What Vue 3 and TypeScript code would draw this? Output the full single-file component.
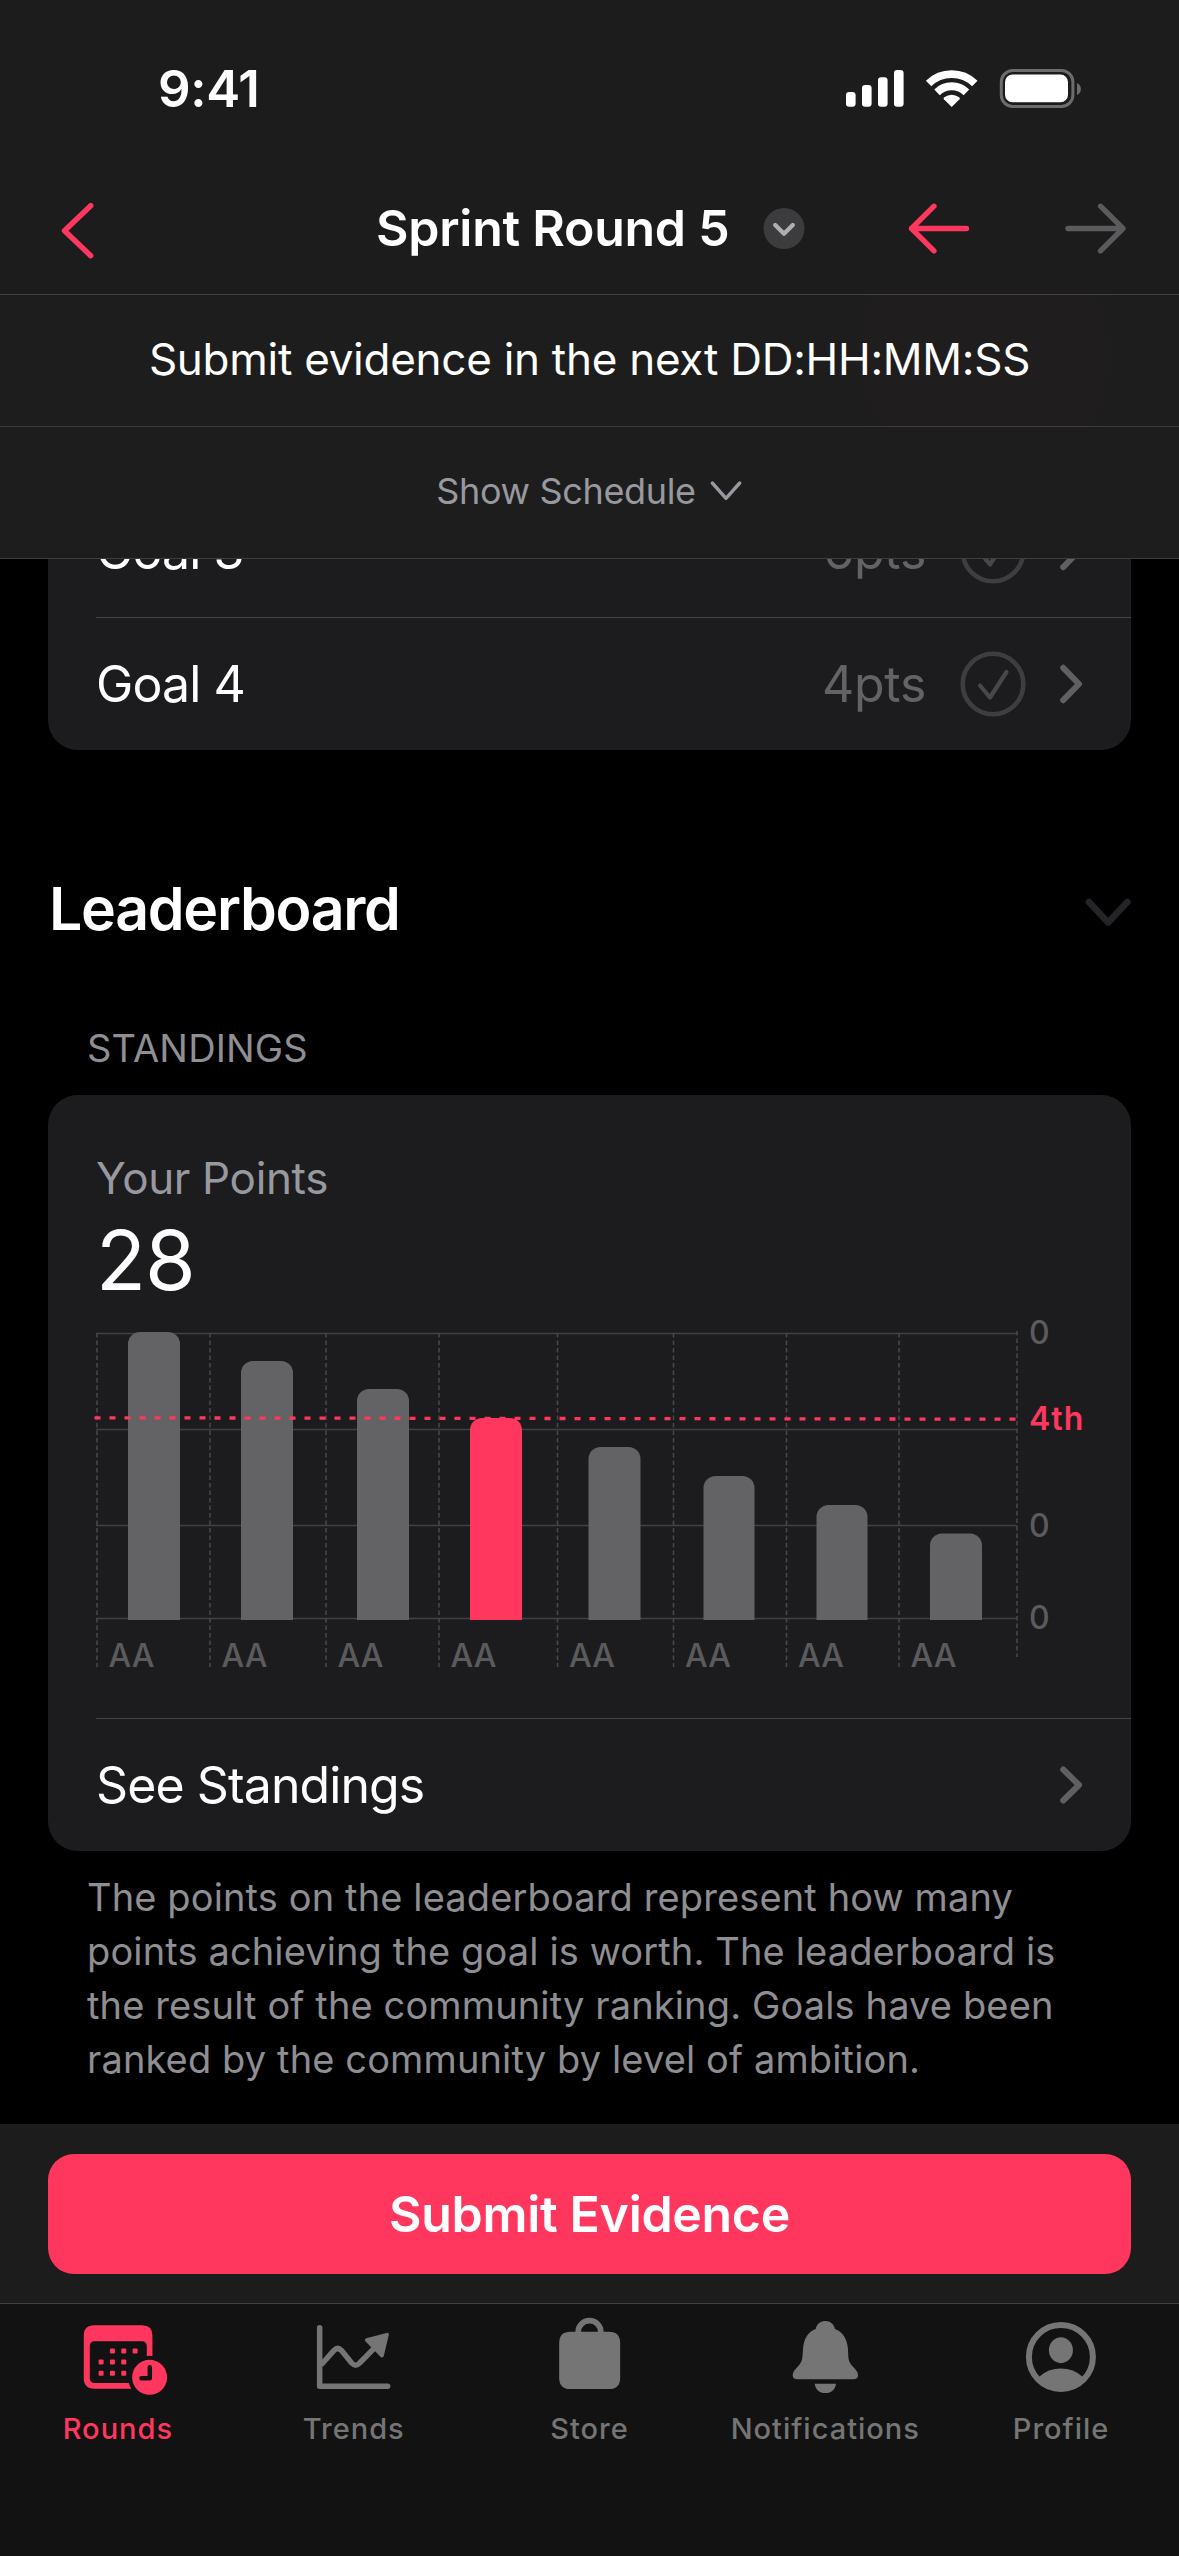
<script setup lang="ts">
interface Goal {
  name: string
  points: string
}

interface Column {
  x: number
  barX: number
  barWidth: number
  top: number
  own?: boolean
}

const goals: Goal[] = [
  { name: 'Goal 3', points: '6pts' },
  { name: 'Goal 4', points: '4pts' },
]

const columns: Column[] = [
  { x: 1, barX: 32, barWidth: 52, top: 6 },
  { x: 114, barX: 145, barWidth: 52, top: 35 },
  { x: 230, barX: 261, barWidth: 52, top: 63 },
  { x: 343, barX: 374, barWidth: 52, top: 92, own: true },
  { x: 461.5, barX: 492.5, barWidth: 52, top: 121 },
  { x: 577.5, barX: 607.5, barWidth: 51, top: 150 },
  { x: 690.5, barX: 720.5, barWidth: 51, top: 179 },
  { x: 803, barX: 834, barWidth: 52, top: 207.5 },
]

const gridLines: number[] = [7.5, 103.5, 199.5, 292.5]
const baseline = 294

const axisLabels = [
  { y: 18, text: '0' },
  { y: 210.5, text: '0' },
  { y: 303, text: '0' },
]

// Bar outline: rounded at the top, square at the baseline
function barPath(c: Column): string {
  const r = 12
  const right = c.barX + c.barWidth
  return `M${c.barX} ${baseline}V${c.top + r}a${r} ${r} 0 0 1 ${r} ${-r}H${right - r}a${r} ${r} 0 0 1 ${r} ${r}V${baseline}Z`
}
</script>

<template>
  <div class="screen">
    <header class="top">
      <div class="status">
        <span class="time">9:41</span>
        <svg class="status-icons" width="240" height="44" viewBox="844 66 240 44">
          <g fill="#fff">
            <rect x="846" y="91" width="9.6" height="14.7" rx="3.2" />
            <rect x="862" y="84" width="9.6" height="21.7" rx="3.2" />
            <rect x="878" y="76.3" width="9.6" height="29.4" rx="3.2" />
            <rect x="894" y="69" width="9.6" height="36.7" rx="3.2" />
            <path d="M951.7 106L943.9 98.3Q943 97.2 944.2 96.3Q951.7 91 959.2 96.3Q960.4 97.2 959.5 98.3Z" />
          </g>
          <g fill="none" stroke="#fff">
            <path d="M928.6 82.5A33.3 33.3 0 0 1 974.8 82.5" stroke-width="7.8" />
            <path d="M937 91.3A21.1 21.1 0 0 1 966.4 91.3" stroke-width="8" />
          </g>
          <rect x="1001.3" y="69.5" width="71.6" height="36" rx="11.5" fill="none" stroke="#6c6c6c" stroke-width="3" />
          <rect x="1005" y="73.5" width="63" height="27.7" rx="7.5" fill="#fff" />
          <path d="M1077 82V94Q1080.9 92 1080.9 88Q1080.9 84 1077 82Z" fill="#6c6c6c" />
        </svg>
      </div>
      <nav class="nav">
        <svg width="40" height="64" viewBox="58 197 40 64">
          <path d="M90.7 205.7L64.5 230.7L90.7 255.7" class="line accent" stroke-width="5.4" />
        </svg>
        <span class="title">Sprint Round 5</span>
        <svg class="toggle" width="42" height="42" viewBox="0 0 42 42">
          <circle cx="21" cy="20.500" r="20.500" fill="#3c3c3e" />
          <path d="M12.200 17L21 25.800L29.800 17" class="line" stroke="#aeaeb5" stroke-width="4.300" />
        </svg>
        <svg class="prev" width="64" height="52" viewBox="0 0 64 52">
          <path d="M5.500 25.500H60.500M28 3.200L5.500 25.500L28 47.800" class="line accent" stroke-width="5.300" />
        </svg>
        <svg class="next" width="64" height="52" viewBox="0 0 64 52">
          <path d="M60 25.500H5M37.500 3.200L60 25.500L37.500 47.800" class="line" stroke="#5b5b5e" stroke-width="5.300" />
        </svg>
      </nav>
      <div class="notice">Submit evidence in the next DD:HH:MM:SS</div>
      <div class="schedule">
        <span>Show Schedule</span>
        <svg width="34" height="24" viewBox="0 0 34 24">
          <path d="M3.300 4L17 19.300L30.700 4" class="line" stroke="#98989f" stroke-width="3.400" />
        </svg>
      </div>
    </header>

    <main class="content">
      <section class="card goals">
        <div v-for="goal in goals" :key="goal.name" class="row">
          <span class="row-name">{{ goal.name }}</span>
          <span class="points">{{ goal.points }}</span>
          <svg class="check" width="66" height="66" viewBox="0 0 66 66">
            <circle cx="33" cy="33" r="30.300" fill="none" stroke="#3e3e41" stroke-width="4.600" />
            <path d="M20 34.500L30 46.500L46.500 21" class="line" stroke="#48484a" stroke-width="4.200" />
          </svg>
          <svg width="24" height="44" viewBox="0 0 24 44">
            <path d="M4.200 5.800L20 22L4.200 38.200" class="line" stroke="#5f5f64" stroke-width="6" />
          </svg>
        </div>
      </section>

      <div class="heading">
        <h2>Leaderboard</h2>
        <svg width="48" height="34" viewBox="0 0 48 34">
          <path d="M6 6L25.200 26.500L44.300 6" class="line" stroke="#242428" stroke-width="6.600" />
        </svg>
      </div>

      <div class="section-label">STANDINGS</div>

      <section class="card standings">
        <div class="summary">
          <div class="summary-label">Your Points</div>
          <div class="summary-value">28</div>
        </div>
        <svg class="chart" width="1035" height="350" viewBox="0 0 1035 350">
          <g stroke="#414144" stroke-width="1.500">
            <line v-for="y in gridLines" :key="y" x1="0" :y1="y" x2="921" :y2="y" />
          </g>
          <g stroke="#48484b" stroke-width="1.500" stroke-dasharray="4.500 3">
            <line v-for="c in columns" :key="c.x" :x1="c.x" y1="7" :x2="c.x" y2="341" />
            <line x1="921" y1="5" x2="921" y2="331" />
          </g>
          <path v-for="c in columns" :key="c.x" :d="barPath(c)" :fill="c.own ? '#ff375f' : '#636365'" />
          <line x1="-1.500" y1="91.800" x2="920" y2="93.200" stroke="#ff375f" stroke-width="3.300" stroke-dasharray="6 9" />
          <text v-for="c in columns" :key="c.x" :x="c.x + 11.5" y="341" class="tick">AA</text>
          <text v-for="label in axisLabels" :key="label.y" x="933" :y="label.y" class="tick">{{ label.text }}</text>
          <text x="933" y="104" class="tick own">4th</text>
        </svg>
        <div class="row">
          <span class="row-name">See Standings</span>
          <svg width="24" height="44" viewBox="0 0 24 44">
            <path d="M4.200 6.500L20 22L4.200 37.500" class="line" stroke="#5f5f64" stroke-width="6" />
          </svg>
        </div>
      </section>

      <p class="footnote">
        The points on the leaderboard represent how many<br />
        points achieving the goal is worth. The leaderboard is<br />
        the result of the community ranking. Goals have been<br />
        ranked by the community by level of ambition.
      </p>
    </main>

    <div class="action">
      <button type="button" class="submit">Submit Evidence</button>
    </div>

    <footer class="tabs">
      <div class="tab active">
        <svg width="120" height="100" viewBox="173.700 42 360 300">
          <defs>
            <mask id="clock-gap">
              <rect x="170" y="40" width="370" height="310" fill="#fff" />
              <circle cx="448.500" cy="262" r="65" fill="#000" />
            </mask>
          </defs>
          <path mask="url(#clock-gap)" fill-rule="evenodd" d="M283 106H426Q457 106 457 137V265Q457 296 426 296H283Q251 296 251 265V137Q251 106 283 106ZM284 154Q269 154 269 169V264Q269 279 284 279H425Q440 279 440 264V169Q440 154 425 154Z" />
          <rect x="329.500" y="175.500" width="15" height="15" rx="3" />
          <rect x="363.500" y="175.500" width="15" height="15" rx="3" />
          <rect x="397.500" y="175.500" width="15" height="15" rx="3" />
          <rect x="295.500" y="208.500" width="15" height="15" rx="3" />
          <rect x="329.500" y="208.500" width="15" height="15" rx="3" />
          <rect x="363.500" y="208.500" width="15" height="15" rx="3" />
          <rect x="295.500" y="242.500" width="15" height="15" rx="3" />
          <rect x="329.500" y="242.500" width="15" height="15" rx="3" />
          <rect x="363.500" y="242.500" width="15" height="15" rx="3" />
          <circle cx="448.500" cy="262" r="52.500" />
          <path d="M449 232V264.500H424" fill="none" stroke="#121212" stroke-width="13.500" stroke-linecap="round" stroke-linejoin="round" />
        </svg>
        <span>Rounds</span>
      </div>
      <div class="tab">
        <svg width="120" height="100" viewBox="882 42 360 300">
          <g fill="none" stroke="#757575" stroke-width="16.500" stroke-linecap="round" stroke-linejoin="round">
            <path d="M959 113V289H1163" />
            <path d="M963 225L1002 181Q1013 170 1024 181L1055 219Q1067 232 1079 219L1128 169" stroke-linecap="butt" />
            <path d="M1100 150L1161 134L1146 197Z" fill="#757575" stroke-width="11" />
          </g>
        </svg>
        <span>Trends</span>
      </div>
      <div class="tab">
        <svg width="120" height="100" viewBox="388.500 42 360 300">
          <path d="M513 125H628Q662 125 662 159V263Q662 297 628 297H513Q479 297 479 263V159Q479 125 513 125Z" />
          <path d="M536 130V126A34 34 0 0 1 604 126V130" fill="none" stroke="#757575" stroke-width="17" />
        </svg>
        <span>Store</span>
      </div>
      <div class="tab">
        <svg width="120" height="100" viewBox="-44 42 360 300">
          <path d="M137 93C152 93 163 102 166 117C190 126 203 148 205 178C206 208 206 216 220 230C229 239 235 246 235 256Q235 268 221 268H53Q39 268 39 256C39 246 45 239 54 230C68 216 68 208 70 178C72 148 84 126 108 117C111 102 122 93 137 93Z" />
          <path d="M105 281H169C167 298 155 309 137 309C119 309 107 298 105 281Z" />
        </svg>
        <span>Notifications</span>
      </div>
      <div class="tab">
        <svg width="120" height="100" viewBox="663.300 42 360 300">
          <circle cx="843" cy="201" r="96" fill="none" stroke="#757575" stroke-width="18" />
          <ellipse cx="843" cy="180.500" rx="36" ry="39" />
          <path d="M778 260Q805 235.500 843 235.500Q881 235.500 908 260Q884 300 843 300Q802 300 778 260Z" />
        </svg>
        <span>Profile</span>
      </div>
    </footer>
  </div>
</template>

<style>
body {
  background: #000;
}
</style>

<style scoped>
.screen {
  width: 1179px;
  height: 2556px;
  overflow: hidden;
  display: flex;
  flex-direction: column;
  background: #000;
  color: #fff;
  font-family: Inter, "Liberation Sans", sans-serif;
}

svg {
  display: block;
  flex: none;
}

.line {
  fill: none;
  stroke-linecap: round;
  stroke-linejoin: round;
}

.accent {
  stroke: #ff375f;
}

.top {
  flex: none;
  background: #1c1c1c;
}

.status {
  height: 165px;
  box-sizing: border-box;
  padding: 12px 95px 0 158px;
  display: flex;
  align-items: center;
  justify-content: space-between;
}

.time {
  font-size: 51px;
  font-weight: 600;
  letter-spacing: -0.3px;
}

.nav {
  height: 127px;
  padding: 0 0 2px 58px;
  border-bottom: 1px solid #414141;
  display: flex;
  align-items: center;
}

.title {
  width: 356px;
  margin-left: 278px;
  padding-bottom: 2px;
  font-size: 50px;
  font-weight: 600;
  letter-spacing: -0.25px;
  white-space: nowrap;
}

.toggle {
  margin-left: 31px;
}

.prev {
  margin-left: 101px;
}

.next {
  margin-left: 93px;
}

.notice {
  height: 128px;
  padding-bottom: 3px;
  border-bottom: 1px solid #3d3d3d;
  background: radial-gradient(ellipse 180px 200px at 985px 60px, #201d1e 40%, #1d1d1d 100%);
  display: flex;
  align-items: center;
  justify-content: center;
  font-size: 44px;
  letter-spacing: -0.27px;
  white-space: nowrap;
}

.schedule {
  height: 128px;
  padding-bottom: 3px;
  border-bottom: 1px solid #3d3d3d;
  background: #1d1d1d;
  display: flex;
  align-items: center;
  justify-content: center;
  gap: 13px;
  color: #98989f;
  font-size: 36px;
  letter-spacing: -0.35px;
}

.content {
  flex: 1;
  min-height: 0;
  overflow: hidden;
}

.card {
  margin: 0 48px;
  border-radius: 30px;
  background: #1c1c1e;
  overflow: hidden;
}

.goals {
  margin-top: -74px;
}

.row {
  height: 132px;
  margin-left: 48px;
  padding-right: 48px;
  display: flex;
  align-items: center;
}

.row + .row {
  border-top: 1px solid #454548;
}

.row-name {
  flex: 1;
  font-size: 50px;
  letter-spacing: -0.9px;
}

.points {
  color: #636366;
  font-size: 50px;
  letter-spacing: -0.3px;
}

.check {
  margin: 0 33px 0 34px;
}

.heading {
  margin: 119px 48px 0;
  height: 80px;
  display: flex;
  align-items: center;
  justify-content: space-between;
}

.heading svg {
  margin-top: 7px;
}

h2 {
  margin: 0;
  padding: 0 0 2px 1px;
  font-size: 59px;
  font-weight: 600;
  letter-spacing: -1.3px;
}

.section-label {
  margin: 72px 0 20px 87px;
  color: #8e8e93;
  font-size: 38px;
  line-height: 54px;
  letter-spacing: 0.15px;
}

.summary {
  padding: 53px 0 0 48px;
}

.summary-label {
  color: #98989f;
  font-size: 44px;
  line-height: 60px;
  letter-spacing: -0.35px;
}

.summary-value {
  margin-top: 8px;
  font-size: 82px;
  line-height: 90px;
  letter-spacing: -1px;
}

.chart {
  margin: 20px 0 42px 48px;
  overflow: visible;
}

.tick {
  fill: #5b5b5e;
  font-size: 32px;
  font-weight: 500;
}

.own {
  fill: #ff375f;
  font-weight: 600;
  letter-spacing: 1px;
}

.standings .row {
  border-top: 1px solid #454548;
}

.footnote {
  margin: 19px 0 0 87px;
  color: #8e8e93;
  font-size: 38px;
  line-height: 54px;
  letter-spacing: 0.13px;
  white-space: nowrap;
}

.action {
  flex: none;
  height: 179px;
  box-sizing: border-box;
  padding: 30px 48px 29px;
  background: #1c1c1c;
}

.submit {
  width: 100%;
  height: 120px;
  padding: 0;
  border: 0;
  border-radius: 26px;
  background: #ff375f;
  color: #fff;
  font-family: inherit;
  font-size: 50px;
  font-weight: 600;
  letter-spacing: -0.3px;
}

.tabs {
  flex: none;
  height: 252px;
  border-top: 1px solid #404040;
  background: #121212;
  display: flex;
}

.tab {
  flex: 1 1 0;
  min-width: 0;
  display: flex;
  flex-direction: column;
  align-items: center;
  color: #757575;
  fill: #757575;
  font-size: 29px;
  font-weight: 500;
  line-height: 40px;
}

.tab span {
  margin-top: 5px;
  letter-spacing: 1px;
}

.active {
  color: #ff375f;
  fill: #ff375f;
}
</style>
